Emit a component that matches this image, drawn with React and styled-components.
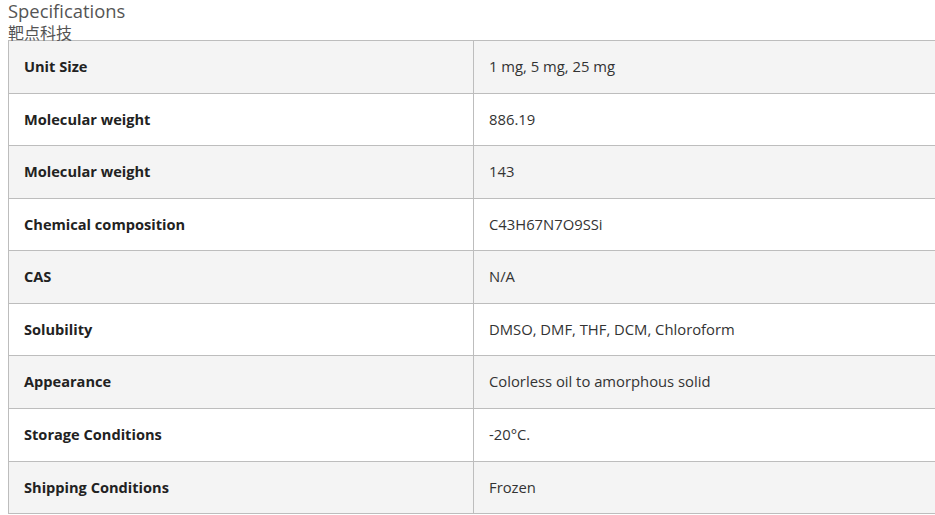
import React from "react";
import styled, { createGlobalStyle } from "styled-components";

const Global = createGlobalStyle`
  html, body { margin: 0; padding: 0; background: #fff; overflow: hidden; }
  body { font-family: "Open Sans", "Noto Sans", "Noto Sans CJK SC", sans-serif; }
`;

const Page = styled.div`
  padding-left: 8px;
  width: 935px;
  box-sizing: border-box;
  overflow: hidden;
`;

const Title = styled.div`
  font-size: 18.4px;
  line-height: 22px;
  color: #555;
  font-family: "Open Sans", "Noto Sans", sans-serif;
`;

const Subtitle = styled.div`
  font-size: 16px;
  line-height: 20px;
  height: 18px;
  color: #555;
  font-family: "Noto Sans CJK SC", sans-serif;
`;

const Table = styled.table`
  border-collapse: collapse;
  width: 930px;
  table-layout: fixed;
  color: #333;
`;

const Col = styled.col`
  width: 465px;
`;

const Row = styled.tr`
  background: ${(p) => (p.$shade ? "#f4f4f4" : "#fff")};
`;

const Cell = styled.td`
  border: 1px solid #bdbdbd;
  padding: 15px 16px 15px 15px;
  line-height: 21.56px;
  font-size: ${(p) => (p.$label ? "14.6px" : "14.8px")};
  font-weight: ${(p) => (p.$label ? 700 : 400)};
  color: ${(p) => (p.$label ? "#222" : "#333")};
  vertical-align: middle;
  white-space: nowrap;
`;

const rows = [
  ["Unit Size", "1 mg, 5 mg, 25 mg"],
  ["Molecular weight", "886.19"],
  ["Molecular weight", "143"],
  ["Chemical composition", "C43H67N7O9SSi"],
  ["CAS", "N/A"],
  ["Solubility", "DMSO, DMF, THF, DCM, Chloroform"],
  ["Appearance", "Colorless oil to amorphous solid"],
  ["Storage Conditions", "-20°C."],
  ["Shipping Conditions", "Frozen"],
];

export default function App() {
  return (
    <Page>
      <Global />
      <Title>Specifications</Title>
      <Subtitle>靶点科技</Subtitle>
      <Table>
        <colgroup>
          <Col />
          <Col />
        </colgroup>
        <tbody>
          {rows.map(([k, v], i) => (
            <Row key={i} $shade={i % 2 === 0}>
              <Cell $label>{k}</Cell>
              <Cell>{v}</Cell>
            </Row>
          ))}
        </tbody>
      </Table>
    </Page>
  );
}
